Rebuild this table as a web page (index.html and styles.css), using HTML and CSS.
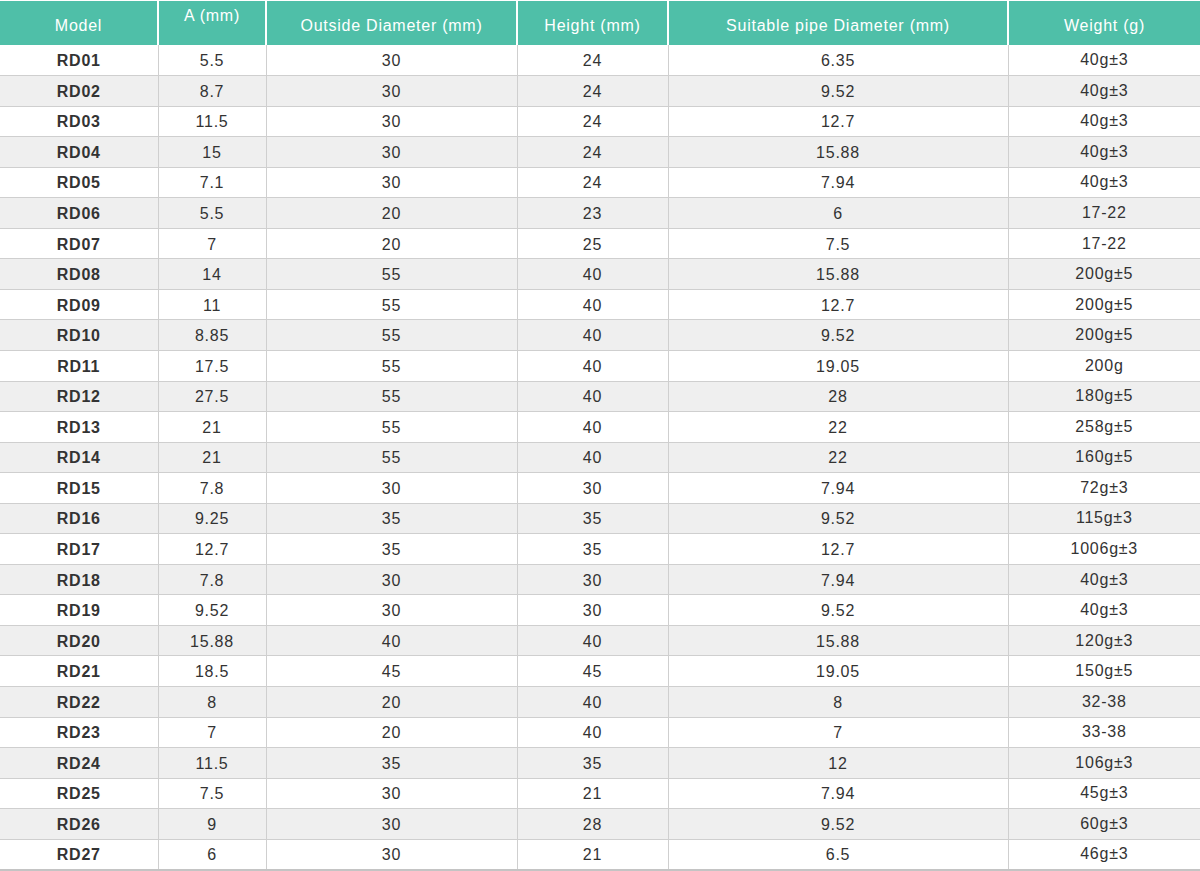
FILE: index.html
```html
<!DOCTYPE html>
<html>
<head>
<meta charset="utf-8">
<link rel="stylesheet" href="styles.css">
</head>
<body>
<table class="spec">
<colgroup>
<col class="c1"><col class="c2"><col class="c3"><col class="c4"><col class="c5"><col class="c6">
</colgroup>
<thead>
<tr><th>Model</th><th class="top">A (mm)</th><th>Outside Diameter (mm)</th><th>Height (mm)</th><th>Suitable pipe Diameter (mm)</th><th>Weight (g)</th></tr>
</thead>
<tbody>
<tr><td class="m">RD01</td><td>5.5</td><td>30</td><td>24</td><td>6.35</td><td class="w">40g±3</td></tr>
<tr><td class="m">RD02</td><td>8.7</td><td>30</td><td>24</td><td>9.52</td><td class="w">40g±3</td></tr>
<tr><td class="m">RD03</td><td>11.5</td><td>30</td><td>24</td><td>12.7</td><td class="w">40g±3</td></tr>
<tr><td class="m">RD04</td><td>15</td><td>30</td><td>24</td><td>15.88</td><td class="w">40g±3</td></tr>
<tr><td class="m">RD05</td><td>7.1</td><td>30</td><td>24</td><td>7.94</td><td class="w">40g±3</td></tr>
<tr><td class="m">RD06</td><td>5.5</td><td>20</td><td>23</td><td>6</td><td class="w">17-22</td></tr>
<tr><td class="m">RD07</td><td>7</td><td>20</td><td>25</td><td>7.5</td><td class="w">17-22</td></tr>
<tr><td class="m">RD08</td><td>14</td><td>55</td><td>40</td><td>15.88</td><td class="w">200g±5</td></tr>
<tr><td class="m">RD09</td><td>11</td><td>55</td><td>40</td><td>12.7</td><td class="w">200g±5</td></tr>
<tr><td class="m">RD10</td><td>8.85</td><td>55</td><td>40</td><td>9.52</td><td class="w">200g±5</td></tr>
<tr><td class="m">RD11</td><td>17.5</td><td>55</td><td>40</td><td>19.05</td><td class="w">200g</td></tr>
<tr><td class="m">RD12</td><td>27.5</td><td>55</td><td>40</td><td>28</td><td class="w">180g±5</td></tr>
<tr><td class="m">RD13</td><td>21</td><td>55</td><td>40</td><td>22</td><td class="w">258g±5</td></tr>
<tr><td class="m">RD14</td><td>21</td><td>55</td><td>40</td><td>22</td><td class="w">160g±5</td></tr>
<tr><td class="m">RD15</td><td>7.8</td><td>30</td><td>30</td><td>7.94</td><td class="w">72g±3</td></tr>
<tr><td class="m">RD16</td><td>9.25</td><td>35</td><td>35</td><td>9.52</td><td class="w">115g±3</td></tr>
<tr><td class="m">RD17</td><td>12.7</td><td>35</td><td>35</td><td>12.7</td><td class="w">1006g±3</td></tr>
<tr><td class="m">RD18</td><td>7.8</td><td>30</td><td>30</td><td>7.94</td><td class="w">40g±3</td></tr>
<tr><td class="m">RD19</td><td>9.52</td><td>30</td><td>30</td><td>9.52</td><td class="w">40g±3</td></tr>
<tr><td class="m">RD20</td><td>15.88</td><td>40</td><td>40</td><td>15.88</td><td class="w">120g±3</td></tr>
<tr><td class="m">RD21</td><td>18.5</td><td>45</td><td>45</td><td>19.05</td><td class="w">150g±5</td></tr>
<tr><td class="m">RD22</td><td>8</td><td>20</td><td>40</td><td>8</td><td class="w">32-38</td></tr>
<tr><td class="m">RD23</td><td>7</td><td>20</td><td>40</td><td>7</td><td class="w">33-38</td></tr>
<tr><td class="m">RD24</td><td>11.5</td><td>35</td><td>35</td><td>12</td><td class="w">106g±3</td></tr>
<tr><td class="m">RD25</td><td>7.5</td><td>30</td><td>21</td><td>7.94</td><td class="w">45g±3</td></tr>
<tr><td class="m">RD26</td><td>9</td><td>30</td><td>28</td><td>9.52</td><td class="w">60g±3</td></tr>
<tr><td class="m">RD27</td><td>6</td><td>30</td><td>21</td><td>6.5</td><td class="w">46g±3</td></tr>
</tbody>
</table>
</body>
</html>
```

FILE: styles.css
```css
html, body {
  margin: 0;
  padding: 0;
  background: #ffffff;
}
body {
  padding-top: 1px;
  font-family: "Liberation Sans", Arial, sans-serif;
}
.spec {
  width: 1200px;
  border-collapse: collapse;
  table-layout: fixed;
}
.c1 { width: 158px; }
.c2 { width: 108px; }
.c3 { width: 251px; }
.c4 { width: 151px; }
.c5 { width: 340px; }
.c6 { width: 192px; }
.spec th {
  background: #4fbfa8;
  color: #ffffff;
  font-weight: normal;
  font-size: 16px;
  letter-spacing: 0.75px;
  height: 44px;
  padding: 5px 0 0 0;
  box-sizing: border-box;
  border-left: 2px solid #ffffff;
  text-align: center;
  vertical-align: middle;
}
.spec th:first-child { border-left: none; }
.spec th.top {
  vertical-align: top;
  padding-top: 6px;
}
.spec td {
  height: 30.55px;
  padding: 2px 0 0 0;
  box-sizing: border-box;
  text-align: center;
  vertical-align: middle;
  font-size: 16px;
  letter-spacing: 0.75px;
  color: #333333;
  border-left: 1px solid #cfcfcf;
  border-bottom: 1px solid #cfcfcf;
}
.spec td:first-child { border-left: none; }
.spec td.m { font-weight: bold; }
.spec td.w { padding-top: 0; padding-bottom: 0; }
.spec tbody tr:nth-child(even) td { background: #efefef; }
.spec tbody tr:last-child td { border-bottom: 2px solid #c4c4c4; }
```
